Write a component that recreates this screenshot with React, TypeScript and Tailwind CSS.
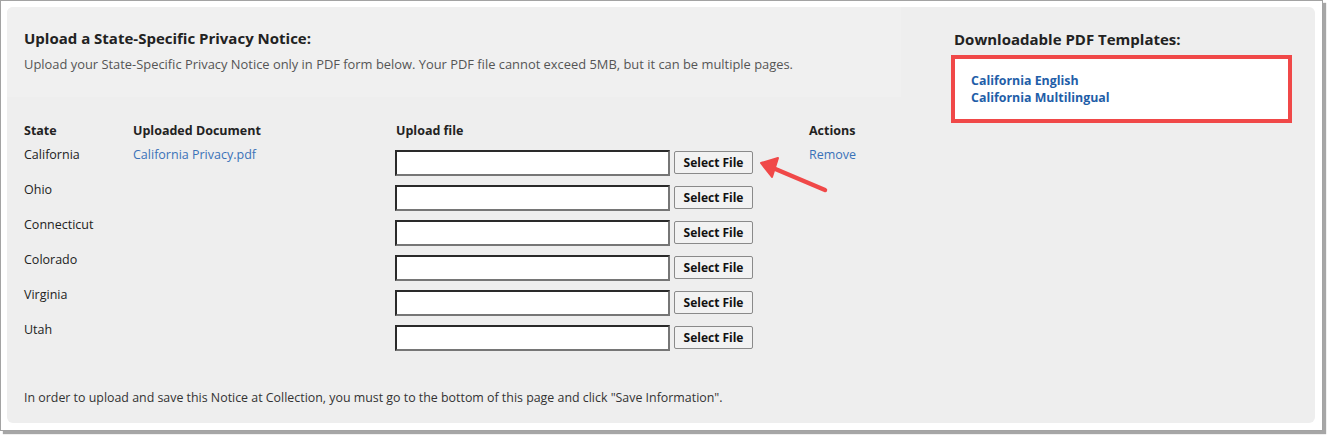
import React from "react";

const states = ["California", "Ohio", "Connecticut", "Colorado", "Virginia", "Utah"];

export default function App() {
  return (
    <div className="w-[1330px] h-[437px] bg-white" style={{ fontFamily: '"Open Sans", "Noto Sans", sans-serif' }}>
      <div className="relative w-[1323px] h-[431px] border border-[#a3a3a3] bg-white p-[6px] shadow-[3px_3px_1px_rgba(0,0,0,0.35)]">
        <div className="flex h-[416px] w-[1308px] rounded-[6px] bg-[#eeeeee] text-[#222]">
          <div className="flex w-[894px] flex-col">
            <div className="h-[90px] rounded-tl-[6px] bg-[#f0f0f0] pl-[17px] pt-[21px]">
              <div className="text-[15px] font-bold leading-[20px] text-[#222]">Upload a State-Specific Privacy Notice:</div>
              <div className="mt-[7px] text-[12.9px] leading-[18px] text-[#555]">
                Upload your State-Specific Privacy Notice only in PDF form below. Your PDF file cannot exceed 5MB, but it can be multiple pages.
              </div>
            </div>
            <div className="pl-[17px] pt-[25px]">
              <div className="grid grid-cols-[109px_262px_414px_100px] text-[12.5px] font-bold leading-[18px]">
                <div>State</div>
                <div>Uploaded Document</div>
                <div className="pl-[1px]">Upload file</div>
                <div>Actions</div>
              </div>
              <div className="mt-[6px] flex flex-col">
                {states.map((s, i) => (
                  <div key={s} className="grid h-[35px] grid-cols-[109px_262px_414px_100px] text-[12.5px] leading-[18px]">
                    <div>{s}</div>
                    <div className="text-[#3a72b8]">{i === 0 ? "California Privacy.pdf" : ""}</div>
                    <div className="flex items-start gap-[4px] pt-[4px]">
                      <div className="h-[26px] w-[275px] border-2 border-t-[#2a2a2a] border-l-[#2a2a2a] border-b-[#767676] border-r-[#767676] bg-white" />
                      <button className="mt-[1px] h-[23px] w-[79px] rounded-[2px] border border-[#8a8a8a] bg-[#f2f2f2] text-[12px] font-bold leading-[20px] text-[#111]">
                        Select File
                      </button>
                    </div>
                    <div className="text-[#3a72b8]">{i === 0 ? "Remove" : ""}</div>
                  </div>
                ))}
              </div>
              <div className="mt-[33px] text-[12.4px] leading-[18px] text-[#333]">
                In order to upload and save this Notice at Collection, you must go to the bottom of this page and click "Save Information".
              </div>
            </div>
          </div>
          <div className="ml-[53px] flex flex-col pt-[22px]">
            <div className="text-[15px] font-bold leading-[20px] text-[#222]">Downloadable PDF Templates:</div>
            <div className="-ml-[3px] mt-[6px] h-[68px] w-[341px] border-4 border-[#f04848] bg-white pl-[16px] pt-[13px]">
              <div className="text-[12.4px] font-bold leading-[17px] text-[#1f5ea8]">California English</div>
              <div className="text-[12.4px] font-bold leading-[17px] text-[#1f5ea8]">California Multilingual</div>
            </div>
          </div>
        </div>
        <svg className="pointer-events-none absolute left-0 top-0" width="1330" height="437">
          <line x1="824" y1="189" x2="772" y2="167" stroke="#f04848" strokeWidth="4.5" strokeLinecap="round" />
          <polygon points="760,162 777,157 771,176" fill="#f04848" stroke="#f04848" strokeWidth="2" strokeLinejoin="round" />
        </svg>
      </div>
    </div>
  );
}
